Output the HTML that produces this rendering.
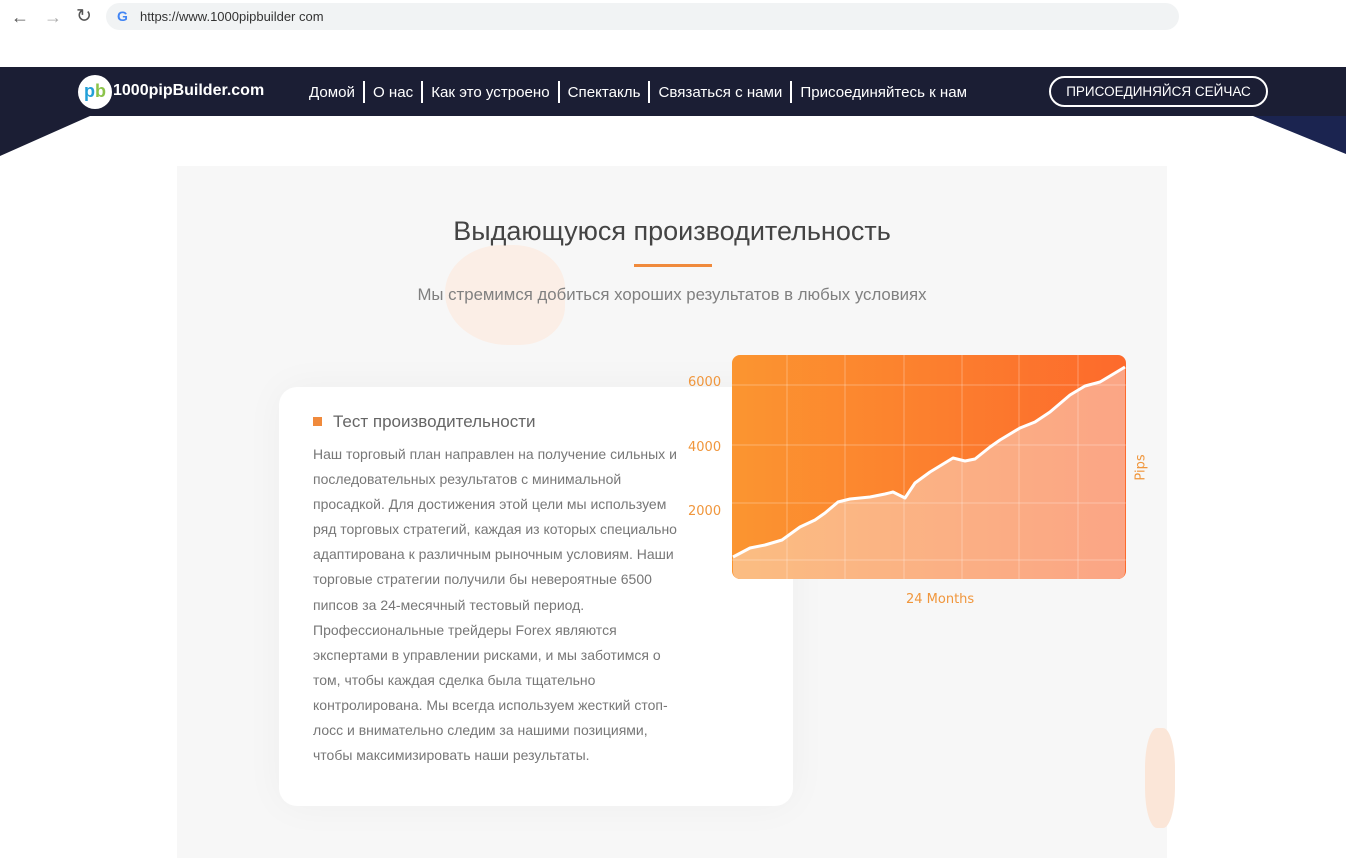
<!DOCTYPE html>
<html><head><meta charset="utf-8"><style>
*{margin:0;padding:0;box-sizing:border-box}
body{width:1346px;height:858px;background:#fff;font-family:"Liberation Sans",sans-serif;position:relative;overflow:hidden}
.abs{position:absolute}
.url{left:106px;top:3px;width:1073px;height:27px;border-radius:14px;background:#f1f3f4;font-size:13px;color:#333;line-height:27px;padding-left:34px}
.nav{left:0;top:67px;width:1346px;height:49px;background:#1b1e34}
.menu{left:309px;top:80px;display:flex;align-items:center;height:24px}
.menu a{color:#fff;font-size:15.1px;text-decoration:none}
.menu span.sep{display:inline-block;width:2px;height:22px;background:#fff;margin:0 8px}
.btn{left:1049px;top:76px;width:219px;height:31px;border:2px solid #fff;border-radius:16px;color:#fff;font-size:13.5px;text-align:center;line-height:27px}
.panel{left:177px;top:166px;width:990px;height:692px;background:#f7f7f7}
h1{position:absolute;left:177px;width:990px;top:216px;text-align:center;font-weight:normal;font-size:27px;color:#444}
.card{left:279px;top:387px;width:514px;height:419px;background:#fff;border-radius:18px;box-shadow:0 0 40px rgba(0,0,0,0.04)}
.card p{position:absolute;left:34px;top:55px;width:368px;font-size:14px;line-height:25.1px;color:#777}
.ax{color:#f0963c;font-size:13px;font-family:"DejaVu Sans",sans-serif}
</style></head><body>
<div class="abs" style="left:11px;top:7px;font-size:18px;color:#555">&#8592;</div>
<div class="abs" style="left:44px;top:7px;font-size:18px;color:#aaa">&#8594;</div>
<div class="abs" style="left:76px;top:5px;font-size:19px;color:#555">&#8635;</div>
<div class="abs url">https://www.1000pipbuilder com</div>
<div class="abs" style="left:117px;top:8px;font-size:14px;font-weight:bold;color:#4285f4">G</div>

<div class="abs nav"></div>
<svg class="abs" style="left:0;top:116px" width="1346" height="44"><polygon points="0,0 90,0 0,40" fill="#1b1e34"/><polygon points="1253,0 1346,0 1346,38" fill="#1b2450"/></svg>
<div class="abs" style="left:78px;top:75px;width:34px;height:34px;border-radius:50%;background:#fff;font-weight:bold;font-size:18px;line-height:32px;text-align:center;color:#22a0d8">p<span style="color:#8bc34a">b</span></div>
<div class="abs" style="left:113px;top:82px;color:#fff;font-weight:bold;font-size:16px">1000pipBuilder.com</div>
<div class="abs menu"><a>Домой</a><span class="sep"></span><a>О нас</a><span class="sep"></span><a>Как это устроено</a><span class="sep"></span><a>Спектакль</a><span class="sep"></span><a>Связаться с нами</a><span class="sep"></span><a>Присоединяйтесь к нам</a></div>
<div class="abs btn">ПРИСОЕДИНЯЙСЯ СЕЙЧАС</div>

<div class="abs panel"></div>
<div class="abs" style="left:445px;top:245px;width:120px;height:100px;border-radius:50% 45% 40% 55%;background:#fbeee6"></div>
<div class="abs" style="left:1145px;top:728px;width:30px;height:100px;border-radius:40%;background:#fbe6d8"></div>
<h1>Выдающуюся производительность</h1>
<div class="abs" style="left:634px;top:264px;width:78px;height:3px;background:#f08a3c"></div>
<div class="abs" style="left:177px;width:990px;top:285px;text-align:center;font-size:16.8px;color:#808080">Мы стремимся добиться хороших результатов в любых условиях</div>

<div class="abs card">
<div class="abs" style="left:34px;top:30px;width:9px;height:9px;background:#f08a3c"></div>
<div class="abs" style="left:54px;top:25px;font-size:17px;color:#666">Тест производительности</div>
<p>Наш торговый план направлен на получение сильных и последовательных результатов с минимальной просадкой. Для достижения этой цели мы используем ряд торговых стратегий, каждая из которых специально адаптирована к различным рыночным условиям. Наши торговые стратегии получили бы невероятные 6500 пипсов за 24-месячный тестовый период. Профессиональные трейдеры Forex являются экспертами в управлении рисками, и мы заботимся о том, чтобы каждая сделка была тщательно контролирована. Мы всегда используем жесткий стоп-лосс и внимательно следим за нашими позициями, чтобы максимизировать наши результаты.</p>
</div>

<svg class="abs" style="left:732px;top:355px" width="394" height="224">
<defs>
<linearGradient id="g1" x1="0" y1="0" x2="1" y2="0"><stop offset="0" stop-color="#fb9530"/><stop offset="1" stop-color="#fd6a2c"/></linearGradient>
<linearGradient id="g2" x1="0" y1="0" x2="1" y2="0"><stop offset="0" stop-color="#fbbd82"/><stop offset="1" stop-color="#fba585"/></linearGradient>
</defs>
<rect width="394" height="224" rx="8" fill="url(#g1)"/>
<path d="M1,202 L18,193 33,190 50,185 68,172 83,165 93,158 106,147 118,144 138,142 153,139 161,137 173,143 183,128 198,117 221,103 233,106 243,104 258,92 268,85 288,73 303,67 318,57 338,40 353,31 368,27 393,12 L393,216 Q393,224 385,224 L9,224 Q1,224 1,216 Z" fill="url(#g2)"/>
<g stroke="rgba(255,255,255,0.3)" stroke-width="1">
<line x1="55" y1="0" x2="55" y2="224"/><line x1="113" y1="0" x2="113" y2="224"/><line x1="172" y1="0" x2="172" y2="224"/><line x1="230" y1="0" x2="230" y2="224"/><line x1="287" y1="0" x2="287" y2="224"/><line x1="346" y1="0" x2="346" y2="224"/>
<line x1="0" y1="30" x2="394" y2="30"/><line x1="0" y1="90" x2="394" y2="90"/><line x1="0" y1="148" x2="394" y2="148"/><line x1="0" y1="205" x2="394" y2="205"/>
</g>
<path d="M1,202 L18,193 33,190 50,185 68,172 83,165 93,158 106,147 118,144 138,142 153,139 161,137 173,143 183,128 198,117 221,103 233,106 243,104 258,92 268,85 288,73 303,67 318,57 338,40 353,31 368,27 393,12" fill="none" stroke="#fff" stroke-width="3" stroke-linejoin="round"/>
</svg>
<div class="abs ax" style="left:688px;top:375px">6000</div>
<div class="abs ax" style="left:688px;top:440px">4000</div>
<div class="abs ax" style="left:688px;top:504px">2000</div>
<div class="abs ax" style="left:906px;top:592px">24 Months</div>
<div class="abs ax" style="left:1128px;top:460px;transform:rotate(-90deg)">Pips</div>
</body></html>
